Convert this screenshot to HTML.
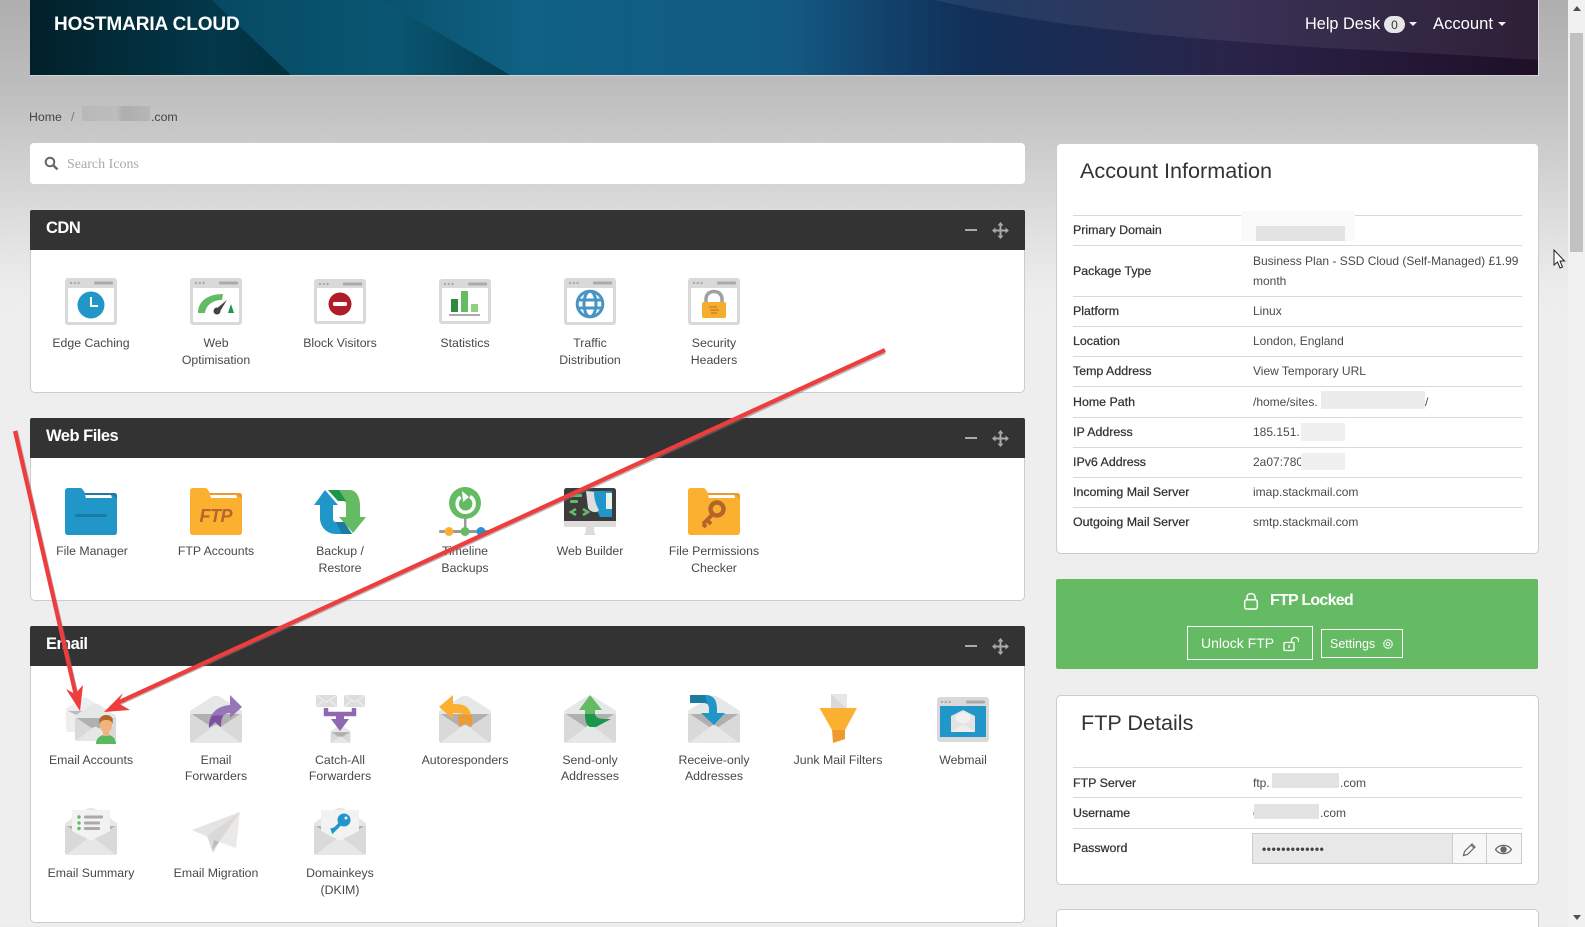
<!DOCTYPE html>
<html lang="en"><head><meta charset="utf-8"><title>HostMaria Cloud</title>
<style>
html,body{margin:0;padding:0;width:1585px;height:927px;overflow:hidden}
body{position:relative;font-family:"Liberation Sans",sans-serif;color:#444;background:linear-gradient(180deg,#aeaeae 0,#c0c0c0 100px,#d9d9d9 200px,#ececec 285px,#eee 320px,#eee 100%)}
div,svg,span{position:absolute}
.t{white-space:nowrap;line-height:18px;height:18px;font-size:12.3px}
.c{width:124px;text-align:center;color:#484848}
.box{background:#fff;border:1px solid #ccc;box-sizing:border-box;border-radius:5px}
.ph{left:30px;width:995px;height:40px;background:#333;border-radius:2px 2px 0 0}
.h{color:#fff;font-weight:bold;font-size:16.5px;left:46px;letter-spacing:-.5px}
.line{left:1073px;width:449px;height:1px;background:#d9d9d9}
.k{left:1073px;color:#333;-webkit-text-stroke:.25px #333;font-size:12.4px}
.v{left:1253px;color:#4a4a4a;font-size:12px}
.bl{background:#e3e3e3}
.i{width:52px;height:48px;overflow:visible}
.ttl{color:#333;font-size:21.6px;line-height:26px;height:26px}
</style></head><body>

<svg width="0" height="0" style="left:0;top:0">
<defs>
<symbol id="env" viewBox="0 0 52 48">
<path d="M0 16L22 2Q26 0 30 2L52 16V45Q52 48 49 48H3Q0 48 0 45Z" fill="#d9d9d9"/>
<path d="M0 16L22 2Q26 0 30 2L52 16V19H0Z" fill="#e6e7e7"/>
<path d="M2 19H50L26 35Z" fill="#b0b0b0"/>
<path d="M0 19L26 37L52 19V46H0Z" fill="#d9d9d9"/>
<path d="M1 48L22 32Q26 28 30 32L51 48Z" fill="#e6e7e7"/>
</symbol>
<symbol id="win" viewBox="0 0 52 47">
<rect width="52" height="47" rx="3" fill="#d9d9d9"/>
<rect x="3" y="10" width="46" height="34" rx="1" fill="#fff"/>
<circle cx="6" cy="5" r="1.2" fill="#aaa"/><circle cx="9.8" cy="5" r="1.2" fill="#aaa"/><circle cx="13.6" cy="5" r="1.2" fill="#aaa"/>
<rect x="29" y="3.5" width="19" height="3" rx="1" fill="#aaa"/>
</symbol>
<symbol id="fold" viewBox="0 0 52 47">
<path d="M0 3Q0 0 3 0H15Q17 0 18 2L20 5H49Q52 5 52 8V44Q52 47 49 47H3Q0 47 0 44Z"/>
</symbol>
</defs>
</svg>

<!-- header -->
<svg style="left:30px;top:0" width="1508" height="76" viewBox="0 0 1508 76">
<defs><linearGradient id="hg" x1="0" x2="1" y1="0" y2="0">
<stop offset="0" stop-color="#01222c"/><stop offset=".17" stop-color="#04485d"/><stop offset=".33" stop-color="#106184"/><stop offset=".5" stop-color="#135a83"/><stop offset=".62" stop-color="#113059"/><stop offset=".8" stop-color="#2a2349"/><stop offset="1" stop-color="#1f0f27"/></linearGradient>
<linearGradient id="hd" x1="0" x2="1" y1="0" y2="0"><stop offset="0" stop-color="#012029"/><stop offset=".7" stop-color="#03384a"/><stop offset="1" stop-color="#02303f"/></linearGradient>
<linearGradient id="hm" x1="0" x2="1" y1="0" y2="0"><stop offset="0" stop-color="#064a62"/><stop offset=".6" stop-color="#0a5672"/><stop offset="1" stop-color="#043d52"/></linearGradient>
</defs>
<rect width="1508" height="75" fill="url(#hg)"/>
<path d="M0 0H182L261 75H0Z" fill="url(#hd)"/>
<path d="M182 0H353L480 75H261Z" fill="url(#hm)"/>
<path d="M905 0C1030 30 1180 40 1295 48C1380 52 1450 56 1508 60V0Z" fill="#fff" opacity=".07"/>
<rect y="75" width="1508" height="1" fill="#ddd" opacity=".7"/>
</svg>
<div style="left:1538px;top:0;width:1px;height:76px;background:#ddd"></div>
<div class="t" style="left:54px;top:16px;color:#fff;font-weight:bold;font-size:19px;letter-spacing:-.1px">HOSTMARIA CLOUD</div>
<div class="t" style="left:1305px;top:15px;color:#fff;font-size:16.300px">Help Desk</div>
<div style="left:1384px;top:16px;width:21px;height:17px;border-radius:9px;background:#e6e6e6;color:#333;font-size:12px;line-height:18px;text-align:center">0</div>
<div style="left:1409px;top:22px;border:4px solid transparent;border-top-color:#eee;border-bottom:0"></div>
<div class="t" style="left:1433px;top:15px;color:#fff;font-size:16.6px">Account</div>
<div style="left:1498px;top:22px;border:4px solid transparent;border-top-color:#eee;border-bottom:0"></div>

<!-- scrollbar -->
<div style="left:1568px;top:0;width:17px;height:927px;background:#f1f1f1"></div>
<div style="left:1570px;top:33px;width:13px;height:219px;background:#c1c1c1"></div>
<div style="left:1573px;top:6px;border:4px solid transparent;border-bottom:5px solid #505050;border-top:0"></div>
<div style="left:1573px;top:915px;border:4px solid transparent;border-top:5px solid #505050;border-bottom:0"></div>
<svg style="left:1553px;top:249px" width="14" height="22" viewBox="0 0 14 22"><path d="M1 1V16L4.500 13L7 19L9.500 18L7 12H11.500Z" fill="#fff" stroke="#222" stroke-width="1"/></svg>

<!-- breadcrumb -->
<div class="t" style="left:29px;top:108px;color:#444">Home</div>
<div class="t" style="left:71px;top:108px;color:#777">/</div>
<div style="left:82px;top:106px;width:68px;height:15px;background:linear-gradient(90deg,#b8b8b8,#bdbdbd 50%,#aeaeae 60%,#b6b6b6)"></div>
<div class="t" style="left:151px;top:108px;color:#444">.com</div>

<!-- search -->
<div style="left:30px;top:143px;width:995px;height:41px;background:#fff;border-radius:4px"></div>
<svg style="left:44px;top:156px" width="15" height="15" viewBox="0 0 15 15"><circle cx="6" cy="6" r="4.300" fill="none" stroke="#666" stroke-width="2"/><path d="M9.200 9.200L13.500 13.500" stroke="#666" stroke-width="2.400"/></svg>
<div class="t" style="left:67px;top:156px;font-family:'Liberation Serif',serif;font-size:14px;color:#aaa">Search Icons</div>

<!-- panels -->
<div class="box" style="left:30px;top:210px;width:995px;height:183px"></div>
<div class="ph" style="top:210px"></div>
<div class="t h" style="top:219px">CDN</div>

<div class="box" style="left:30px;top:418px;width:995px;height:183px"></div>
<div class="ph" style="top:418px"></div>
<div class="t h" style="top:427px">Web Files</div>

<div class="box" style="left:30px;top:626px;width:995px;height:297px"></div>
<div class="ph" style="top:626px"></div>
<div class="t h" style="top:635px">Email</div>

<!-- panel controls -->
<div style="left:965px;top:229px;width:12px;height:2px;background:#aaa"></div>
<div style="left:965px;top:437px;width:12px;height:2px;background:#aaa"></div>
<div style="left:965px;top:645px;width:12px;height:2px;background:#aaa"></div>
<svg style="left:992px;top:222px" width="17" height="17" viewBox="0 0 17 17"><path d="M8.500 1V16M1 8.500H16" stroke="#aaa" stroke-width="2"/><path d="M8.500 0L11.500 3.500H5.500ZM8.500 17L11.500 13.500H5.500ZM0 8.500L3.500 5.500V11.500ZM17 8.500L13.500 5.500V11.500Z" fill="#aaa"/></svg>
<svg style="left:992px;top:430px" width="17" height="17" viewBox="0 0 17 17"><path d="M8.500 1V16M1 8.500H16" stroke="#aaa" stroke-width="2"/><path d="M8.500 0L11.500 3.500H5.500ZM8.500 17L11.500 13.500H5.500ZM0 8.500L3.500 5.500V11.500ZM17 8.500L13.500 5.500V11.500Z" fill="#aaa"/></svg>
<svg style="left:992px;top:638px" width="17" height="17" viewBox="0 0 17 17"><path d="M8.500 1V16M1 8.500H16" stroke="#aaa" stroke-width="2"/><path d="M8.500 0L11.500 3.500H5.500ZM8.500 17L11.500 13.500H5.500ZM0 8.500L3.500 5.500V11.500ZM17 8.500L13.500 5.500V11.500Z" fill="#aaa"/></svg>

<!-- CDN icons -->
<svg class="i" style="left:65px;top:278px" viewBox="0 0 52 48"><use href="#win" width="52" height="47"/><circle cx="26" cy="27" r="13.500" fill="#2196c9"/><path d="M26 19V28H33" fill="none" stroke="#fff" stroke-width="2"/></svg>
<svg class="i" style="left:190px;top:278px" viewBox="0 0 52 48"><use href="#win" width="52" height="47"/><path d="M8 35C8 23 18 16 33 16L32 22C23 22 16 27 15 35Z" fill="#65bb63"/><path d="M41 26L44 35H38Z" fill="#1a974a"/><circle cx="27" cy="33" r="3.500" fill="#444"/><path d="M26 31L37 22L29 35Z" fill="#444"/></svg>
<svg class="i" style="left:314px;top:279px;height:45px" viewBox="0 0 52 45"><rect width="52" height="45" rx="3" fill="#d9d9d9"/><rect x="3" y="9" width="46" height="33" fill="#fff"/><circle cx="6" cy="5" r="1.200" fill="#aaa"/><circle cx="9.800" cy="5" r="1.200" fill="#aaa"/><circle cx="13.600" cy="5" r="1.200" fill="#aaa"/><rect x="29" y="3.500" width="19" height="3" rx="1" fill="#aaa"/><circle cx="26" cy="25" r="11.500" fill="#b01c27"/><rect x="19" y="23" width="14" height="4" rx="1.500" fill="#fff"/></svg>
<svg class="i" style="left:439px;top:279px;height:45px" viewBox="0 0 52 45"><rect width="52" height="45" rx="3" fill="#d9d9d9"/><rect x="3" y="9" width="46" height="33" fill="#fff"/><circle cx="6" cy="5" r="1.200" fill="#aaa"/><circle cx="9.800" cy="5" r="1.200" fill="#aaa"/><circle cx="13.600" cy="5" r="1.200" fill="#aaa"/><rect x="29" y="3.500" width="19" height="3" rx="1" fill="#aaa"/><rect x="12" y="20" width="7" height="13" fill="#2d8a3e"/><rect x="22" y="12" width="7" height="21" fill="#65bb63"/><rect x="32" y="25" width="7" height="8" fill="#8fcf7f"/><rect x="10" y="35" width="31" height="2" fill="#aaa"/></svg>
<svg class="i" style="left:564px;top:278px" viewBox="0 0 52 48"><use href="#win" width="52" height="47"/><g fill="none" stroke="#4795c4" stroke-width="3"><circle cx="26" cy="26" r="12.800"/><ellipse cx="26" cy="26" rx="6" ry="12.800"/><path d="M14 22H38M14 30H38"/></g></svg>
<svg class="i" style="left:688px;top:278px" viewBox="0 0 52 48"><use href="#win" width="52" height="47"/><path d="M18 25V21C18 11 34 11 34 21V25" fill="none" stroke="#a0a0a0" stroke-width="3.500"/><rect x="14" y="24" width="24" height="16" rx="2" fill="#f4ae2b"/><path d="M21 29H29M22 32H31M23 35H29" stroke="#c77a2a" stroke-width="1.300"/></svg>

<div class="t c" style="left:29px;top:334px">Edge Caching</div>
<div class="t c" style="left:154px;top:334px">Web</div>
<div class="t c" style="left:154px;top:351px">Optimisation</div>
<div class="t c" style="left:278px;top:334px">Block Visitors</div>
<div class="t c" style="left:403px;top:334px">Statistics</div>
<div class="t c" style="left:528px;top:334px">Traffic</div>
<div class="t c" style="left:528px;top:351px">Distribution</div>
<div class="t c" style="left:652px;top:334px">Security</div>
<div class="t c" style="left:652px;top:351px">Headers</div>

<!-- Web Files icons -->
<svg class="i" style="left:65px;top:488px;fill:#2196c9" viewBox="0 0 52 48"><use href="#fold" width="52" height="47"/><path d="M20 5H49Q52 5 52 8V11L47 7H20Z" fill="#1b7ba3"/><path d="M20 7H46L47 10H21Z" fill="#fff"/><rect x="10" y="26" width="32" height="3" rx="1" fill="#1b7ba3"/></svg>
<svg class="i" style="left:190px;top:488px;fill:#fbb12f" viewBox="0 0 52 48"><use href="#fold" width="52" height="47"/><path d="M20 5H49Q52 5 52 8V11L47 7H20Z" fill="#ed9a30"/><path d="M20 7H46L47 10H21Z" fill="#fff"/><text x="26" y="34" text-anchor="middle" font-family="Liberation Sans" font-weight="bold" font-style="italic" font-size="18" fill="#b3672c" textLength="33">FTP</text></svg>
<svg class="i" style="left:314px;top:488px" viewBox="0 0 52 48"><path d="M11 2L24 17H19V30C19 33 20 34 22 34H30L38 46H22C12 46 6 38 6 30V17H0Z" fill="#2196c9"/><path d="M14 2H36C42 2 46 9 46 17V29H52L39 45L25 29H32V17C32 14 31 13 29 13H24Z" fill="#65bb63"/><path d="M14 2H25L32 13H24Z" fill="#1a974a"/><path d="M22 34H30L38 46H28Z" fill="#1b7ba3"/></svg>
<svg class="i" style="left:439px;top:487px" viewBox="0 0 52 48"><rect x="0" y="43" width="52" height="3" rx="1.500" fill="#999"/><rect x="25" y="28" width="2.500" height="16" fill="#999"/><circle cx="26" cy="16" r="16" fill="#65bb63"/><path d="M21.500 10A8.500 8.500 0 1 0 31 9.500" fill="none" stroke="#fff" stroke-width="3.500"/><path d="M23 4L30 10L24 15Z" fill="#fff"/><circle cx="10" cy="44.500" r="4.500" fill="#fbb12f"/><circle cx="26" cy="44.500" r="4.500" fill="#65bb63"/><circle cx="42" cy="44.500" r="4.500" fill="#2196c9"/></svg>
<svg class="i" style="left:564px;top:488px" viewBox="0 0 52 48"><rect width="52" height="39" rx="2.500" fill="#3c3c3c"/><path d="M0 33H52V37Q52 39 50 39H2Q0 39 0 37Z" fill="#dcdcdc"/><path d="M20 47C22 45 22 42 22 39H30C30 42 30 45 32 47Z" fill="#dcdcdc"/><path d="M24 3H48V29H36Z" fill="#2196c9"/><rect x="42" y="5" width="6" height="16" fill="#e8f4ea"/><path d="M22 3L30 4C30 12 33 19 35 22C33 26 26 24 24 20Z" fill="#ddd"/><rect x="6" y="6" width="12" height="3" rx="1" fill="#65bb63"/><rect x="6" y="12" width="8" height="3" rx="1" fill="#65bb63"/><path d="M12 21L7 24L12 27M19 21L24 24L19 27" fill="none" stroke="#65bb63" stroke-width="2.500"/></svg>
<svg class="i" style="left:688px;top:488px;fill:#fbb12f" viewBox="0 0 52 48"><use href="#fold" width="52" height="47"/><path d="M20 5H49Q52 5 52 8V11L47 7H20Z" fill="#ed9a30"/><path d="M20 7H46L47 10H21Z" fill="#fff"/><circle cx="29" cy="21" r="6.500" fill="none" stroke="#b3652c" stroke-width="4.500"/><path d="M25 26L15 36M19 32L23 36M15 36L18 39" stroke="#b3652c" stroke-width="4" fill="none"/></svg>

<div class="t c" style="left:30px;top:542px">File Manager</div>
<div class="t c" style="left:154px;top:542px">FTP Accounts</div>
<div class="t c" style="left:278px;top:542px">Backup /</div>
<div class="t c" style="left:278px;top:559px">Restore</div>
<div class="t c" style="left:403px;top:542px">Timeline</div>
<div class="t c" style="left:403px;top:559px">Backups</div>
<div class="t c" style="left:528px;top:542px">Web Builder</div>
<div class="t c" style="left:652px;top:542px">File Permissions</div>
<div class="t c" style="left:652px;top:559px">Checker</div>

<!-- Email icons row 1 -->
<svg style="left:66px;top:696px" width="38" height="37" viewBox="0 0 52 48"><path d="M0 16L22 2Q26 0 30 2L52 16V48H3Q0 48 0 45Z" fill="#eeeeee"/><path d="M2 19H30L26 30Z" fill="#bcbcbc"/></svg>
<svg style="left:75px;top:703px" width="41" height="38" viewBox="0 0 52 48"><use href="#env" width="52" height="48"/></svg>
<svg style="left:95px;top:715px" width="22" height="29" viewBox="0 0 22 29"><path d="M1 29C1 23 5 21 8 20H14C17 21 21 23 21 29Z" fill="#5cb85c"/><rect x="8" y="15" width="6" height="6" fill="#eab07d"/><ellipse cx="11" cy="10" rx="6" ry="8" fill="#f0b47c"/><path d="M4.500 9C3 2 8 0 11 0C15 0 19 2 17.500 9C16 5 14 5 11 5C8 5 6 6 4.500 9Z" fill="#b5682d"/></svg>

<svg class="i" style="left:190px;top:695px" viewBox="0 0 52 48"><use href="#env" width="52" height="48"/><path d="M19 33C18 20 26 11 40 10V0L52 12L40 23V18C34 18 31 22 31 32L25 27Z" fill="#9676b5"/><path d="M19 33C19 28 20 24 22 21C26 20 29 20 33 21C31 24 31 28 31 32L25 27Z" fill="#7e50a0"/></svg>

<svg class="i" style="left:314px;top:695px" viewBox="0 0 52 48"><g><rect x="2" y="0" width="21" height="12" fill="#ddd"/><path d="M2 0L12.500 7L23 0M2 12L9 6M23 12L16 6" fill="none" stroke="#f2f2f2" stroke-width="1"/><rect x="30" y="0" width="21" height="12" fill="#ddd"/><path d="M30 0L40.500 7L51 0M30 12L37 6M51 12L44 6" fill="none" stroke="#f2f2f2" stroke-width="1"/></g><use href="#env" x="11" y="30" width="31" height="18"/><path d="M12 13V19H40V13" fill="none" stroke="#8f69ad" stroke-width="4.500"/><path d="M22 19H30V24H35L26 36L17 24H22Z" fill="#8f69ad"/></svg>

<svg class="i" style="left:439px;top:695px" viewBox="0 0 52 48"><use href="#env" width="52" height="48"/><path d="M33 32C34 22 30 18 14 18V24L0 12L14 0V9C28 9 33 12 33 32Z" fill="#fbb12f"/><path d="M19 21C25 19 32 19 33 21V32L27 28L20 32Z" fill="#ed9a30"/></svg>

<svg class="i" style="left:564px;top:695px" viewBox="0 0 52 48"><use href="#env" width="52" height="48"/><path d="M21 20V15H15L26 0L38 15H31V20Z" fill="#65bb63"/><path d="M21 19H31C32 24 37 24 47 24L32 32H26C22 30 21 26 21 19Z" fill="#1a974a"/></svg>

<svg class="i" style="left:688px;top:695px" viewBox="0 0 52 48"><use href="#env" width="52" height="48"/><path d="M2 0H18C26 0 29 6 29 14V18H37L26 30L13 18H21V14C21 10 19 8 17 8H2Z" fill="#2196c9"/><path d="M2 0H17L19 9L17 8H2Z" fill="#1b7ba3"/></svg>

<svg class="i" style="left:812px;top:694px" viewBox="0 0 52 48"><rect x="19" y="0" width="16" height="15" fill="#d9d9d9"/><path d="M19 0L35 15V0Z" fill="#e6e7e7"/><path d="M7.500 14H45L33 36H20Z" fill="#fbb12f"/><path d="M20 36H33V45L21 49Z" fill="#ed9a30"/></svg>

<svg class="i" style="left:937px;top:697px;height:45px" viewBox="0 0 52 45"><rect width="52" height="45" rx="3" fill="#d9d9d9"/><rect x="3" y="9" width="46" height="31" fill="#2196c9"/><circle cx="5" cy="5" r="1.200" fill="#aaa"/><circle cx="8.800" cy="5" r="1.200" fill="#aaa"/><circle cx="12.600" cy="5" r="1.200" fill="#aaa"/><rect x="29" y="3.500" width="19" height="3" rx="1" fill="#aaa"/><path d="M14 19L26 13L38 19V35H14Z" fill="#e3e3e3"/><ellipse cx="26" cy="21" rx="7.500" ry="5.500" fill="#f0f0f0"/><path d="M14 35L26 27L38 35Z" fill="#eee"/></svg>

<div class="t c" style="left:29px;top:751px">Email Accounts</div>
<div class="t c" style="left:154px;top:751px">Email</div>
<div class="t c" style="left:154px;top:767px">Forwarders</div>
<div class="t c" style="left:278px;top:751px">Catch-All</div>
<div class="t c" style="left:278px;top:767px">Forwarders</div>
<div class="t c" style="left:403px;top:751px">Autoresponders</div>
<div class="t c" style="left:528px;top:751px">Send-only</div>
<div class="t c" style="left:528px;top:767px">Addresses</div>
<div class="t c" style="left:652px;top:751px">Receive-only</div>
<div class="t c" style="left:652px;top:767px">Addresses</div>
<div class="t c" style="left:776px;top:751px">Junk Mail Filters</div>
<div class="t c" style="left:901px;top:751px">Webmail</div>

<!-- Email row 2 -->
<svg class="i" style="left:65px;top:807px" viewBox="0 0 52 48"><use href="#env" width="52" height="48"/><path d="M7 3H45V24L26 34L7 24Z" fill="#f2f2f2"/><circle cx="14" cy="10" r="1.700" fill="#65bb63"/><circle cx="14" cy="16" r="1.700" fill="#65bb63"/><circle cx="14" cy="21.500" r="1.700" fill="#65bb63"/><rect x="19" y="8.500" width="19" height="3" rx="1" fill="#aaa"/><rect x="19" y="14.500" width="16" height="3" rx="1" fill="#aaa"/><rect x="19" y="20" width="16" height="3" rx="1" fill="#aaa"/></svg>
<svg class="i" style="left:192px;top:812px" viewBox="0 0 52 48"><path d="M0 18L48 0L44 36L22 28Z" fill="#ebe9e8"/><path d="M48 0L15 24L21 41L27 30Z" fill="#dad9d8"/><path d="M20 38L27 30L22 28Z" fill="#bbb"/><path d="M0 18L15 24L48 0Z" fill="#e6e4e3"/></svg>
<svg class="i" style="left:314px;top:807px" viewBox="0 0 52 48"><use href="#env" width="52" height="48"/><path d="M7 3H45V24L26 34L7 24Z" fill="#f2f2f2"/><circle cx="30" cy="13" r="6.500" fill="#2196c9"/><circle cx="32" cy="11" r="1.500" fill="#f2f2f2"/><path d="M27 16L19 24L18 21" stroke="#2196c9" stroke-width="3.500" fill="none"/></svg>

<div class="t c" style="left:29px;top:864px">Email Summary</div>
<div class="t c" style="left:154px;top:864px">Email Migration</div>
<div class="t c" style="left:278px;top:864px">Domainkeys</div>
<div class="t c" style="left:278px;top:881px">(DKIM)</div>

<!-- account info -->
<div class="box" style="left:1056px;top:143px;width:483px;height:411px;border-radius:5px"></div>
<div class="t ttl" style="left:1080px;top:158px">Account Information</div>
<div class="line" style="top:215px"></div><div class="line" style="top:245px"></div><div class="line" style="top:296px"></div><div class="line" style="top:326px"></div><div class="line" style="top:356px"></div><div class="line" style="top:386px"></div><div class="line" style="top:417px"></div><div class="line" style="top:447px"></div><div class="line" style="top:477px"></div><div class="line" style="top:507px"></div>
<div class="t k" style="top:221px">Primary Domain</div>
<div style="left:1241px;top:211px;width:114px;height:30px;background:#fafafa"></div>
<div class="bl" style="left:1256px;top:226px;width:89px;height:15px"></div>
<div class="t k" style="top:262px">Package Type</div>
<div class="t v" style="top:252px">Business Plan - SSD Cloud (Self-Managed) £1.99</div>
<div class="t v" style="top:272px">month</div>
<div class="t k" style="top:302px">Platform</div><div class="t v" style="top:302px">Linux</div>
<div class="t k" style="top:332px">Location</div><div class="t v" style="top:332px">London, England</div>
<div class="t k" style="top:362px">Temp Address</div><div class="t v" style="top:362px">View Temporary URL</div>
<div class="t k" style="top:393px">Home Path</div><div class="t v" style="top:393px">/home/sites.</div>
<div class="bl" style="left:1321px;top:391px;width:104px;height:18px;background:#ececec"></div>
<div class="t v" style="left:1425px;top:393px">/</div>
<div class="t k" style="top:423px">IP Address</div><div class="t v" style="top:423px">185.151.</div>
<div style="left:1301px;top:423px;width:44px;height:18px;background:#f0f0f0"></div>
<div class="t k" style="top:453px">IPv6 Address</div><div class="t v" style="top:453px">2a07:780</div>
<div style="left:1301px;top:453px;width:44px;height:17px;background:#f0f0f0"></div>
<div class="t k" style="top:483px">Incoming Mail Server</div><div class="t v" style="top:483px">imap.stackmail.com</div>
<div class="t k" style="top:513px">Outgoing Mail Server</div><div class="t v" style="top:513px">smtp.stackmail.com</div>

<!-- FTP locked -->
<div style="left:1056px;top:579px;width:482px;height:90px;background:#65bb63;border-radius:2px"></div>
<svg style="left:1243px;top:592px" width="16" height="18" viewBox="0 0 16 18"><path d="M4 8V5C4 0.500 12 0.500 12 5V8" fill="none" stroke="#fff" stroke-width="1.500"/><rect x="1.700" y="7.700" width="12.600" height="9.300" rx="2" fill="none" stroke="#fff" stroke-width="1.500"/></svg>
<div class="t" style="left:1270px;top:592px;color:#fff;font-weight:bold;font-size:16px;letter-spacing:-.75px">FTP Locked</div>
<div style="left:1187px;top:626px;width:126px;height:34px;border:1px solid #fff;box-sizing:border-box"></div>
<div class="t" style="left:1201px;top:634px;color:#fff;font-size:14px">Unlock FTP</div>
<svg style="left:1283px;top:636px" width="18" height="16" viewBox="0 0 18 16"><rect x="1" y="6.500" width="10" height="8" rx="1" fill="none" stroke="#fff" stroke-width="1.300"/><path d="M8.500 6V4C8.500 0.500 15.500 0.500 15.500 4V6" fill="none" stroke="#fff" stroke-width="1.300"/><rect x="5.400" y="9" width="1.300" height="3" fill="#fff"/></svg>
<div style="left:1321px;top:629px;width:82px;height:29px;border:1px solid #fff;box-sizing:border-box"></div>
<div class="t" style="left:1330px;top:635px;color:#fff;font-size:12.500px">Settings</div>
<svg style="left:1382px;top:638px" width="12" height="12" viewBox="0 0 12 12"><circle cx="6" cy="6" r="4.200" fill="none" stroke="#fff" stroke-width="1.300" stroke-dasharray="2 .6"/><circle cx="6" cy="6" r="1.700" fill="none" stroke="#fff" stroke-width="1"/></svg>

<!-- FTP details -->
<div class="box" style="left:1056px;top:695px;width:483px;height:190px"></div>
<div class="t ttl" style="left:1081px;top:710px">FTP Details</div>
<div class="line" style="top:767px"></div><div class="line" style="top:797px"></div><div class="line" style="top:828px"></div>
<div class="t k" style="top:774px">FTP Server</div>
<div class="t v" style="top:774px">ftp.</div>
<div class="bl" style="left:1272px;top:773px;width:67px;height:15px"></div>
<div class="t v" style="left:1340px;top:774px">.com</div>
<div class="t k" style="top:804px">Username</div>
<div class="t v" style="top:804px">c</div>
<div class="bl" style="left:1254px;top:804px;width:65px;height:15px"></div>
<div class="t v" style="left:1320px;top:804px">.com</div>
<div class="t k" style="top:839px">Password</div>
<div style="left:1252px;top:833px;width:270px;height:31px;box-sizing:border-box;border:1px solid #ccc;background:#e8e8e8"></div>
<div style="left:1452px;top:833px;width:70px;height:31px;box-sizing:border-box;border:1px solid #ccc;background:#f7f7f7"></div>
<div style="left:1486px;top:833px;width:1px;height:31px;background:#ccc"></div>
<div class="t" style="left:1262px;top:840px;color:#444;font-size:12px;letter-spacing:.6px;font-weight:bold">•••••••••••••</div>
<svg style="left:1462px;top:842px" width="15" height="15" viewBox="0 0 15 15"><path d="M1.500 13.500L2.500 9.500L10 2L13 5L5.500 12.500ZM9 3L12 6" fill="none" stroke="#666" stroke-width="1.200"/></svg>
<svg style="left:1495px;top:843px" width="17" height="13" viewBox="0 0 17 13"><path d="M0.500 6.500C4 1 13 1 16.500 6.500C13 12 4 12 0.500 6.500Z" fill="none" stroke="#666" stroke-width="1.300"/><circle cx="8.500" cy="6.500" r="3.200" fill="#666"/></svg>

<div class="box" style="left:1056px;top:909px;width:483px;height:40px"></div>

<!-- red arrows -->
<svg style="left:0;top:0;pointer-events:none" width="1585" height="927" viewBox="0 0 1585 927">
<g fill="none" stroke="#777" stroke-width="4" opacity=".5"><path d="M16 431L78 701M885 352L116 705"/></g>
<path d="M15 431L77 700M885 350L115 704" fill="none" stroke="#ef3d3e" stroke-width="4.200"/>
<path d="M80 711L66 689L75 694L83 685Z" fill="#ef3d3e"/>
<path d="M104 712L123 693L118 703L130 710Z" fill="#ef3d3e"/>
</svg>
</body></html>
